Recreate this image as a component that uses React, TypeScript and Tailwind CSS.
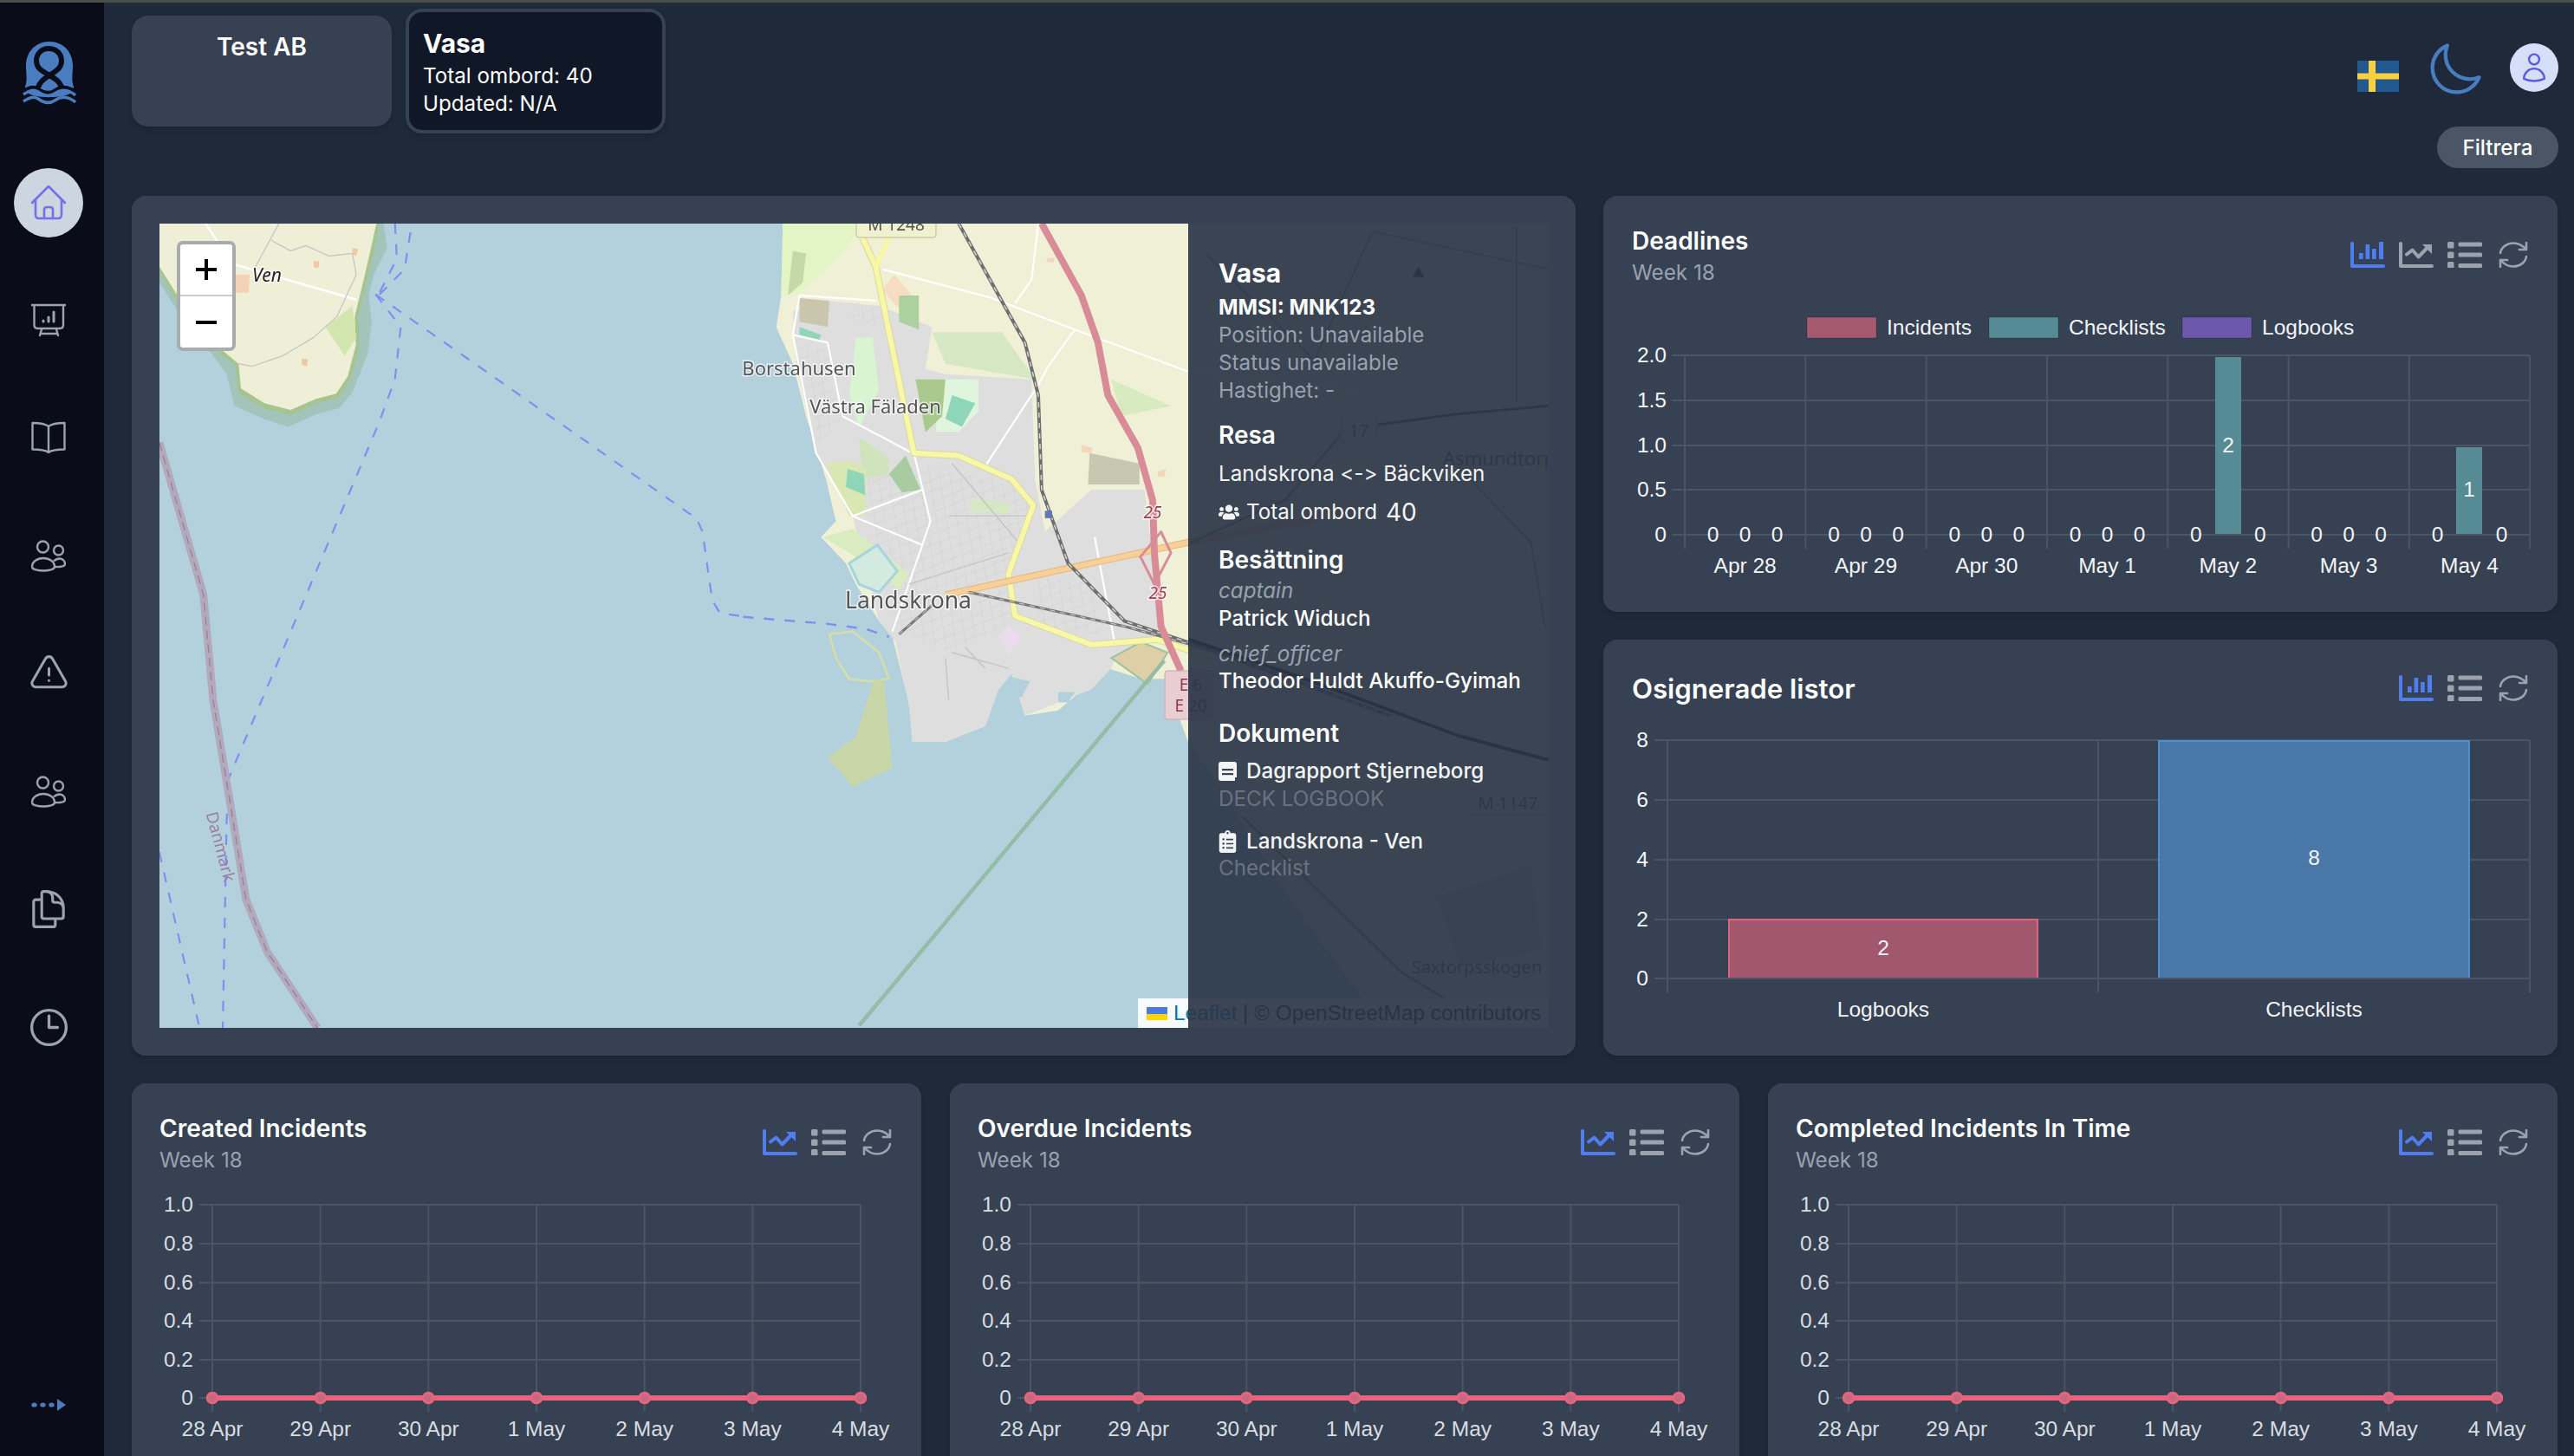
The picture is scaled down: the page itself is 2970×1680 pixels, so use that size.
import { FaClipboardList, FaUsers } from "react-icons/fa";
import {
  HiOutlineClock,
  HiOutlineDocumentDuplicate,
  HiOutlineExclamationTriangle,
  HiOutlineMoon,
  HiOutlineUser,
} from "react-icons/hi2";

const GRID = "#4b5563";
const CHART_FONT = "Liberation Sans, Arial, sans-serif";

function Logo() {
  return (
    <svg viewBox="0 0 90 90" className="w-[90px] h-[90px] ml-2">
      <path d="M42 8C26 8 15 20 15 36C15 46 17 52 14 60C13 66 18 72 42 72C66 72 71 66 70 60C67 52 69 46 69 36C69 20 58 8 42 8Z" fill="#4a7dc0" />
      <path d="M29 61C31 53 38 50 45 45C51 41 56 38 56 30C56 22 50 16 41 16C33 16 27 22 27 30C27 38 32 41 39 45C47 50 54 53 56 61" fill="none" stroke="#0a0d19" strokeWidth="6" />
      <path d="M10 66C20 61 24 60 29 63C36 68 42 69 48 65C54 61 60 60 66 63C68 64 72 65 74 67" fill="none" stroke="#0a0d19" strokeWidth="5" />
      <path d="M12 69C20 64 24 63 29 66C36 71 42 72 48 68C54 64 60 63 66 66C68 67 70 68 72 70" fill="none" stroke="#4a7dc0" strokeWidth="3.5" />
      <path d="M12 77C20 72 24 71 29 74C36 79 42 80 48 76C54 72 60 71 66 74C68 75 70 76 72 78" fill="none" stroke="#4a7dc0" strokeWidth="3.5" />
    </svg>
  );
}

function HomeIcon() {
  return (
    <svg viewBox="0 0 40 40" fill="none" stroke="#6f72e8" strokeWidth="2.6" strokeLinecap="round" strokeLinejoin="round" className="w-10 h-10">
      <path d="M1 20L20 1L39 20" />
      <path d="M5 16V34C5 37 7 38 9 38H31C33 38 35 37 35 34V16" />
      <path d="M15 38V28C15 26 16 25 18 25H22C24 25 25 26 25 28V38" />
    </svg>
  );
}

function PresentationIcon() {
  return (
    <svg viewBox="0 0 40 40" fill="none" stroke="currentColor" strokeWidth="2.4" strokeLinecap="round" strokeLinejoin="round" className="w-10 h-10">
      <path d="M0.5 3H40M3.5 3V26C3.5 28.5 5 30 7.5 30H33C35.5 30 37 28.5 37 26V3" />
      <path d="M10 38L12 31M31 38L29 31M10.5 36H30" />
      <path d="M14 22V21M20 22V17M26 22V11" strokeWidth="3" />
    </svg>
  );
}

function BookIcon() {
  return (
    <svg viewBox="0 0 40 40" fill="none" stroke="currentColor" strokeWidth="2.4" strokeLinejoin="round" className="w-10 h-10">
      <path d="M20 7C15 3 8 3 1.5 3V33.5C8 33.5 15 33.5 20 37C25 33.5 32 33.5 38.5 33.5V3C32 3 25 3 20 7ZM20 7V37" />
    </svg>
  );
}

function UsersIcon() {
  return (
    <svg viewBox="0 0 40 40" fill="none" stroke="currentColor" strokeWidth="2.4" className="w-10 h-10">
      <circle cx="13.5" cy="10" r="6.5" />
      <circle cx="31.5" cy="14" r="5.5" />
      <path d="M1 33C1 27 7 23 14 23C21 23 27 27 27 33C27 36 20 37.5 14 37.5C8 37.5 1 36 1 33Z" />
      <path d="M26 26.5C28 24.5 31 23.5 33 23.5C37 23.5 39 27 39 30C39 32.5 33 33.5 27.5 33" />
    </svg>
  );
}

function BarIcon({ active }: { active?: boolean }) {
  return (
    <svg viewBox="0 0 40 30" className={`w-10 h-[30px] ${active ? "text-[#4f7ef0]" : "text-[#9ca3af]"}`} fill="currentColor">
      <path d="M2 2V28H38" fill="none" stroke="currentColor" strokeWidth="4" strokeLinecap="round" strokeLinejoin="round" />
      <rect x="10" y="13" width="4.7" height="7" />
      <rect x="17.5" y="3" width="4.7" height="17" />
      <rect x="25" y="8" width="4.7" height="12" />
      <rect x="33" y="0" width="5" height="20" />
    </svg>
  );
}

function LineIcon({ active }: { active?: boolean }) {
  return (
    <svg viewBox="0 0 40 30" className={`w-10 h-[30px] ${active ? "text-[#4f7ef0]" : "text-[#9ca3af]"}`} fill="currentColor">
      <path d="M2 2V28H38" fill="none" stroke="currentColor" strokeWidth="4" strokeLinecap="round" strokeLinejoin="round" />
      <path d="M9 14.5L15.5 9.5L22.5 17.5L33 6.5" fill="none" stroke="currentColor" strokeWidth="4" strokeLinecap="round" strokeLinejoin="round" />
      <path d="M27 3H38V14Z" />
    </svg>
  );
}

function ListIcon() {
  return (
    <svg viewBox="0 0 40 30" className="w-10 h-[30px] text-[#9ca3af]" fill="currentColor">
      <rect x="0" y="0" width="7.5" height="7.5" rx="1.5" />
      <rect x="0" y="11.5" width="7.5" height="7.5" rx="1.5" />
      <rect x="0" y="23" width="7.5" height="7.5" rx="1.5" />
      <rect x="12.5" y="0.5" width="27.5" height="5" rx="1.5" />
      <rect x="12.5" y="12.5" width="27.5" height="5" rx="1.5" />
      <rect x="12.5" y="25" width="27.5" height="5" rx="1.5" />
    </svg>
  );
}

function RefreshIcon() {
  return (
    <svg viewBox="0 0 34 30" className="w-[34px] h-[30px] ml-[3px] text-[#9ca3af]" fill="none" stroke="currentColor" strokeWidth="2.6" strokeLinecap="round" strokeLinejoin="round">
      <path d="M2 13C3 6 10 1.5 17 1.5C23 1.5 28 4.5 32 9M32 1V9H24" />
      <path d="M32 17C31 24 24 28.5 17 28.5C11 28.5 6 25.5 2 21M2 29V21H10" />
    </svg>
  );
}

// tile map, redrawn with coordinates read off the reference crops
function P({ d, c, w, dash }: { d: string; c: string; w: number; dash?: string }) {
  return <path d={d} fill="none" stroke={c} strokeWidth={w} strokeDasharray={dash} strokeLinejoin="round" vectorEffect="non-scaling-stroke" />;
}

function F({ d, c }: { d: string; c: string }) {
  return <path d={d} fill={c} />;
}

function MapLabel({ x, y, size, children, color = "#555", italic }: { x: number; y: number; size: number; children: string; color?: string; italic?: boolean }) {
  return (
    <text x={x} y={y} fontSize={size} fill={color} fontStyle={italic ? "italic" : undefined} textAnchor="middle" dominantBaseline="central" fontFamily="Noto Sans, sans-serif" stroke="#ffffffb0" strokeWidth="3" paintOrder="stroke">
      {children}
    </text>
  );
}

const FERRY = "#7f8ff0";

function TileMap() {
  return (
    <svg viewBox="0 0 1603 928" className="absolute inset-0 w-[1603px] h-[928px] blur-[0.6px]">
      <defs>
        <pattern id="streets" width="30" height="20" patternUnits="userSpaceOnUse" patternTransform="rotate(-14)">
          <path d="M0 0H30M0 0V20" stroke="#cbcbcb" strokeWidth="1.6" fill="none" />
        </pattern>
      </defs>
      <rect width="1603" height="928" fill="#b3d1dd" />
      <g transform="translate(-14,-8) scale(0.4464,0.606)">
        <F d="M31 13L610 13L620 60L585 110L572 150L580 200L570 260L530 335L495 365L440 375L365 400L300 385L225 360L205 300L165 260L100 205L31 125Z" c="#a3c4bb" />
        <F d="M31 13L600 13L585 70L565 130L545 190L548 250L525 310L495 345L440 355L370 378L300 365L235 335L228 285L170 250L100 190L31 105Z" c="#a6c490" />
        <F d="M31 13L592 13L575 70L556 130L536 190L539 245L518 304L488 337L436 347L370 368L303 355L242 327L236 280L173 242L103 180L31 95Z" c="#eeefd6" />
        <F d="M460 210L530 170L540 230L510 265Z" c="#d3e6b0" />
        <F d="M225 110L265 110L262 145L225 145Z" c="#f3d2b8" />
        <F d="M400 270L415 272L412 285L400 282ZM430 85L445 85L442 98L430 96ZM530 60L545 62L540 75L530 72Z" c="#f0c8a8" />
        <P d="M150 13L220 90L540 158" c="#ffffff" w={2.5} />
        <P d="M340 13L280 95M320 45L370 65L410 55L470 75L530 70L540 110L490 190L430 230L350 265L270 285L235 280" c="#c3c3c8" w={1.2} />
        <P d="M590 148L1420 575L1435 600L1460 730L1480 755L1550 762" c={FERRY} w={2.2} dash="12 12" />
        <P d="M590 148L655 210L640 310L600 390L210 1070L205 1150L195 1545" c={FERRY} w={2.2} dash="12 12" />
        <P d="M31 1210L135 1545" c={FERRY} w={2.2} dash="12 12" />
        <P d="M640 13L645 80L600 145M680 30L665 100L600 148" c={FERRY} w={2.2} dash="12 12" />
        <P d="M31 430L145 720L170 920L255 1300L310 1400L440 1545" c="#b3a9bc" w={9} />
        <P d="M31 430L145 720L170 920L255 1300L310 1400L440 1545" c="#8f7f9b" w={1.2} dash="10 6" />
      </g>
      <g transform="translate(616,-8) scale(0.3827,0.606)">
        <F d="M270 13L265 150L250 210L300 280L340 380L400 500L430 580L385 610L460 660L490 700L560 770L600 800L640 900L660 940L660 1000L760 1000L880 970L920 900L960 870L1000 950L1100 940L1250 860L1350 880L1420 880L1492 1000L1600 1100L1800 1300L2100 1560L2600 1560L2600 0L270 0Z" c="#eff0d6" />
        <F d="M270 13L265 150L320 145L400 100L470 55L500 13Z" c="#e3f5c5" />
        <F d="M285 150L300 65L340 70L330 125Z" c="#c5d9a8" />
        <F d="M300 180L410 160L560 170L720 210L700 290L760 300L1020 310L1030 500L1060 600L1200 520L1360 520L1380 620L1420 800L1280 830L1260 860L1200 900L1000 950L960 870L920 900L880 970L760 1000L660 1000L650 930L610 810L560 770L480 570L370 450L310 280Z" c="#dedede" />
        <F d="M520 500L690 470L1000 520L1020 560L950 680L950 780L780 830L620 790L540 640Z" c="url(#streets)" />
        <F d="M310 235L400 250L440 400L375 430Z" c="url(#streets)" />
        <F d="M480 165L560 170L590 210L480 200Z" c="url(#streets)" />
        <F d="M1040 680L1200 700L1240 800L1040 780Z" c="url(#streets)" />
        <F d="M320 155L410 160L405 210L320 200Z" c="#c9c6ad" />
        <F d="M570 140L605 110L660 150L620 175Z" c="#f6dcc0" />
        <F d="M620 150L680 150L680 215L620 200Z" c="#add19e" />
        <F d="M720 220L930 220L1030 310L760 280Z" c="#d5e8c3" />
        <F d="M750 310L860 310L860 370L800 410L730 410Z" c="#dff5dc" />
        <F d="M780 340L850 355L810 400L760 385Z" c="#8fd5b8" />
        <F d="M670 310L760 310L750 380L700 410Z" c="#a9c98f" />
        <F d="M500 420L590 460L590 490L510 500Z" c="#cfe4bb" />
        <F d="M590 490L640 455L685 520L630 525Z" c="#a8cba0" />
        <F d="M400 470L480 465L520 480L520 570L470 570Z" c="#d9e8b3" />
        <F d="M465 480L515 490L518 530L460 515Z" c="#8fd5b8" />
        <F d="M490 230L540 230L560 330L500 400L470 340Z" c="#d8f4d0" />
        <F d="M320 210L385 225L380 235L320 225Z" c="#8fd5b8" />
        <F d="M840 535L960 545L950 565L830 560Z" c="#d5e8c3" />
        <F d="M390 610L480 595L650 680L620 710L470 640Z" c="#d8ecc0" />
        <path d="M470 660L555 625L615 675L560 715L500 700Z" fill="#d3eae0" stroke="#a6d5dd" strokeWidth="3" vectorEffect="non-scaling-stroke" />
        <F d="M1195 450L1345 470L1345 510L1190 510Z" c="#c8c8b0" />
        <F d="M1260 310L1440 360L1290 380Z" c="#d8ebc0" />
        <F d="M920 800L950 780L985 800L950 835Z" c="#eadced" />
        <F d="M950 875L1015 885L990 915L950 915ZM1100 905L1150 905L1130 925L1100 925Z" c="#b3d1dd" />
        <F d="M1170 435L1205 440L1200 450L1170 448ZM1400 485L1425 480L1420 495L1400 495ZM1065 80L1090 78L1085 88L1065 86Z" c="#f3d7bd" />
        <path d="M1260 840L1350 810L1430 830L1370 890Z" fill="#dfcfa8" stroke="#9bc49a" strokeWidth="2" vectorEffect="non-scaling-stroke" />
        <P d="M410 795L480 790L560 830L590 880L530 885L470 880L430 840Z" c="#d4dfa8" w={2.5} />
        <F d="M545 880L575 885L600 1050L480 1085L405 1030L490 990Z" c="#c9d7a8" />
        <P d="M1420 845L500 1540" c="#93bda6" w={4.5} />
        <P d="M320 150L550 160M320 150L300 225L370 450L480 570L690 520M300 225L405 240L450 380L660 450M665 450L715 580L600 790M480 570L690 625M570 100L900 155L1150 215L1492 295L2000 330M1040 320L880 475M1150 215L1070 285L1040 320M1040 13L1020 120L970 165M1210 610L1270 810" c="#ffffff" w={2.2} />
        <P d="M770 570L1010 570M650 700L950 640M780 470L980 620M780 830L950 860M760 840L770 920M820 820L880 860" c="#c4c4c4" w={1.4} />
        <P d="M510 40L550 95L590 220L665 450L800 455L960 500L1025 550L950 680L970 760L1200 815L1400 805L1492 825L2000 900" c="#d8d8a8" w={8} />
        <P d="M510 40L550 95L590 220L665 450L800 455L960 500L1025 550L950 680L970 760L1200 815L1400 805L1492 825L2000 900M590 40L550 95" c="#f7f7a6" w={6} />
        <P d="M760 720L1492 620L2000 560" c="#e8b87c" w={8} />
        <P d="M760 720L1492 620L2000 560" c="#f7cf98" w={6} />
        <P d="M800 13L1000 240L1040 340L1050 520L1130 660L1300 770L1560 825L2100 950" c="#6e6e6e" w={4} />
        <P d="M800 13L1000 240L1040 340L1050 520L1130 660L1300 770L1560 825L2100 950" c="#d4d4d4" w={1.5} dash="6 6" />
        <P d="M620 795L720 740M830 715L1300 780L1560 825" c="#777" w={3} />
        <P d="M620 795L720 740M830 715L1300 780L1560 825" c="#d4d4d4" w={1} dash="6 6" />
        <P d="M1050 13L1170 150L1220 240L1250 340L1340 440L1385 540L1390 640L1410 780L1470 865" c="#d98c98" w={8} />
        <P d="M1345 650L1410 600L1440 640L1390 700L1350 650" c="#d98c98" w={3} />
        <P d="M150 762L400 775L520 785L590 800" c={FERRY} w={2.4} dash="12 12" />
        <rect x="1060" y="560" width="22" height="14" fill="#6478b8" />
      </g>
      <g transform="translate(1166,-28) scale(0.3333,0.619)">
        <P d="M720 420L1000 400L1310 385" c="#555" w={3} />
        <P d="M65 820L500 900L1000 1000L1310 1045" c="#222" w={4} />
        <P d="M250 1150L800 1440L950 1490" c="#a08090" w={3} />
        <P d="M70 640L400 560L590 440" c="#996" w={3} />
        <P d="M700 60L1310 130M1200 50L1200 380M1000 500L1250 640L1300 800M120 100L500 300L700 60" c="#888" w={1.5} />
        <F d="M920 1300L1250 1240L1290 1400L1000 1430Z" c="#d4e0b8" />
        <path d="M840 145L860 125L880 145Z" fill="#333" />
      </g>
      <MapLabel x={124} y={59} size={21} color="#222" italic>Ven</MapLabel>
      <text x={71} y={719} fontSize={19} fill="#9c7f9e" textAnchor="middle" dominantBaseline="central" transform="rotate(75 71 719)" fontFamily="Noto Sans, sans-serif">Danmark</text>
      <MapLabel x={738} y={166} size={22}>Borstahusen</MapLabel>
      <MapLabel x={826} y={210} size={22}>Västra Fäladen</MapLabel>
      <MapLabel x={864} y={434} size={26.5}>Landskrona</MapLabel>
      <MapLabel x={1146} y={333} size={19} color="#a53c4c" italic>25</MapLabel>
      <MapLabel x={1152} y={426} size={19} color="#a53c4c" italic>25</MapLabel>
      <rect x="804" y="-10" width="92" height="26" rx="3" fill="#f0f2cf" stroke="#bdbd8c" />
      <text x="850" y="8" fontSize="19" textAnchor="middle" fill="#555" fontFamily="Noto Sans, sans-serif">M 1248</text>
      <rect x="1160" y="516" width="56" height="56" rx="3" fill="#e8cdd3" stroke="#d0a6ae" />
      <text x="1190" y="532" fontSize="19" textAnchor="middle" dominantBaseline="central" fill="#8a3a4a" fontFamily="Noto Sans, sans-serif">E 6</text>
      <text x="1190" y="556" fontSize="19" textAnchor="middle" dominantBaseline="central" fill="#8a3a4a" fontFamily="Noto Sans, sans-serif">E 20</text>
      <rect x="1363" y="222" width="42" height="30" rx="3" fill="#eeeeda" stroke="#aaa" />
      <text x="1384" y="238" fontSize="20" textAnchor="middle" dominantBaseline="central" fill="#555" fontFamily="Noto Sans, sans-serif">17</text>
      <text x="1546" y="270" fontSize="22" textAnchor="middle" dominantBaseline="central" fill="#555" fontFamily="Noto Sans, sans-serif">Asmundtorp</text>
      <rect x="1512" y="652" width="92" height="30" rx="3" fill="#eeeeda" stroke="#aaa" />
      <text x="1556" y="668" fontSize="20" textAnchor="middle" dominantBaseline="central" fill="#555" fontFamily="Noto Sans, sans-serif">M 1147</text>
      <text x="1520" y="857" fontSize="20" textAnchor="middle" dominantBaseline="central" fill="#557" fontFamily="Noto Sans, sans-serif">Saxtorpsskogen</text>
    </svg>
  );
}

function DocBookIcon() {
  return (
    <svg viewBox="0 0 21 22" className="w-[21px] h-[22px] shrink-0">
      <rect width="21" height="22" rx="3" fill="#f3f4f6" />
      <rect x="4" y="8" width="13" height="2.2" fill="#374151" />
      <rect x="4" y="13" width="13" height="2.2" fill="#374151" />
      <rect x="19" y="18" width="2" height="4" fill="#374151" />
    </svg>
  );
}

function InfoPanel() {
  return (
    <div className="absolute inset-y-0 right-0 w-[416px] bg-[#2a3548]/92 pl-[35px] pt-[39px] text-[24.2px] leading-[32px] text-gray-100">
      <div className="text-[30px] leading-[36px] font-bold text-white">Vasa</div>
      <div className="mt-[6px] font-bold text-white">MMSI: MNK123</div>
      <div className="text-gray-400">Position: Unavailable</div>
      <div className="text-gray-400">Status unavailable</div>
      <div className="text-gray-400">Hastighet: -</div>
      <div className="mt-[17px] text-[28px] leading-[36px] font-semibold text-white">Resa</div>
      <div className="mt-[11px] [font-feature-settings:'calt'_0]">Landskrona &lt;-&gt; Bäckviken</div>
      <div className="mt-3 flex items-center">
        <FaUsers className="w-6 h-6 mr-2 shrink-0" />
        <span>Total ombord</span>
        <span className="ml-[10px] text-[28px]">40</span>
      </div>
      <div className="mt-[21px] text-[28px] leading-[36px] font-semibold text-white">Besättning</div>
      <div className="mt-[2px] italic text-gray-400">captain</div>
      <div className="font-medium text-white">Patrick Widuch</div>
      <div className="mt-[9px] italic text-gray-400">chief_officer</div>
      <div className="-mt-px font-medium text-white">Theodor Huldt Akuffo-Gyimah</div>
      <div className="mt-[26px] text-[28px] leading-[36px] font-semibold text-white">Dokument</div>
      <div className="mt-[10px] flex items-center font-medium">
        <DocBookIcon />
        <span className="ml-[11px]">Dagrapport Stjerneborg</span>
      </div>
      <div className="text-gray-500 uppercase">Deck logbook</div>
      <div className="mt-[17px] flex items-center font-medium">
        <FaClipboardList className="w-[21px] h-[26px] shrink-0" />
        <span className="ml-[11px]">Landskrona - Ven</span>
      </div>
      <div className="-mt-px text-gray-500">Checklist</div>
    </div>
  );
}

function MapCard() {
  return (
    <div className="bg-gray-700 rounded-[16px] shadow-md p-8 pr-[31px]">
      <div className="relative h-[928px] overflow-hidden">
        <TileMap />
        <div className="absolute left-5 top-5 w-[68px] h-[127px] border-4 border-[#a7adad] rounded-[7px] bg-white flex flex-col text-black overflow-hidden">
          <div className="h-[60px] border-b-2 border-[#ccc] flex items-center justify-center">
            <svg viewBox="0 0 26 26" className="w-[26px] h-[26px]"><path d="M13 1V25M1 13H25" stroke="#000" strokeWidth="4" /></svg>
          </div>
          <div className="flex-1 flex items-center justify-center">
            <svg viewBox="0 0 26 4" className="w-[26px] h-1"><path d="M1 2H25" stroke="#000" strokeWidth="4" /></svg>
          </div>
        </div>
        <div className="absolute right-0 bottom-0 h-[34px] w-[474px] bg-white/90 flex items-center pl-[10px] gap-[7px] text-[24.4px] text-[#111] font-['Liberation_Sans',sans-serif]">
          <svg viewBox="0 0 24 15" className="w-6 h-[15px] shrink-0">
            <rect width="24" height="8" fill="#4c7be0" />
            <rect y="8" width="24" height="7" fill="#ffd500" />
          </svg>
          <span className="whitespace-nowrap"><span className="text-[#0078a8]">Leaflet</span> | © OpenStreetMap contributors</span>
        </div>
        <InfoPanel />
      </div>
    </div>
  );
}

function T({ x, y, children, anchor = "middle", color = "#f3f4f6" }: { x: number; y: number; children: string | number; anchor?: "middle" | "end"; color?: string }) {
  return (
    <text x={x} y={y - 1} fontSize="24.5" fontFamily={CHART_FONT} fill={color} textAnchor={anchor} dominantBaseline="central">
      {children}
    </text>
  );
}

function Grid({ xs, ys, tickLeft, bottom }: { xs: number[]; ys: number[]; tickLeft: number; bottom: number }) {
  return (
    <g stroke={GRID} strokeWidth="2">
      {ys.map((y) => (
        <line key={y} x1={tickLeft} x2={xs[xs.length - 1]} y1={y} y2={y} />
      ))}
      {xs.map((x) => (
        <line key={x} x1={x} x2={x} y1={ys[0]} y2={bottom} />
      ))}
    </g>
  );
}

const deadlineDays = ["Apr 28", "Apr 29", "Apr 30", "May 1", "May 2", "May 3", "May 4"];

function DeadlinesChart() {
  const xs = [0, 1, 2, 3, 4, 5, 6, 7].map((i) => 94 + i * 139.3);
  const ys = [80, 132, 184, 235, 287];
  const legend = [
    { x: 235, fill: "#a55a70", label: "Incidents", tx: 327 },
    { x: 445, fill: "#568b95", label: "Checklists", tx: 537 },
    { x: 668, fill: "#6d58ae", label: "Logbooks", tx: 760 },
  ];
  return (
    <svg viewBox="0 0 1101 376" className="w-[1101px] h-[376px]">
      {legend.map((l) => (
        <g key={l.label}>
          <rect x={l.x} y="36" width="80" height="24" fill={l.fill} stroke="#00000030" strokeWidth="1" />
          <text x={l.tx} y="47" fontSize="24.5" fontFamily={CHART_FONT} fill="#f3f4f6" dominantBaseline="central">{l.label}</text>
        </g>
      ))}
      <Grid xs={xs} ys={ys} tickLeft={79} bottom={303} />
      {["2.0", "1.5", "1.0", "0.5", "0"].map((v, i) => (
        <T key={v} x={73} y={ys[i]} anchor="end">{v}</T>
      ))}
      <rect x="706" y="82" width="30" height="204" fill="#568b95" />
      <rect x="984" y="186" width="30" height="100" fill="#568b95" />
      <T x={721} y={184}>2</T>
      <T x={999} y={235}>1</T>
      {deadlineDays.map((d, i) => {
        const c = 94 + 69.65 + 139.3 * i;
        const zeros = i === 4 || i === 6 ? [-37, 37] : [-37, 0, 37];
        return (
          <g key={d}>
            {zeros.map((o) => (
              <T key={o} x={c + o} y={287}>0</T>
            ))}
            <T x={c} y={323}>{d}</T>
          </g>
        );
      })}
    </svg>
  );
}

function UnsignedChart() {
  const ys = [24, 93, 162, 231, 299];
  return (
    <svg viewBox="0 0 1101 388" className="w-[1101px] h-[388px]">
      <Grid xs={[74, 571, 1069]} ys={ys} tickLeft={59} bottom={315} />
      {["8", "6", "4", "2", "0"].map((v, i) => (
        <T key={v} x={52} y={ys[i]} anchor="end">{v}</T>
      ))}
      <path d="M145 298V231H501V298" fill="#a55a70" fillOpacity="0.96" stroke="#e0637e" strokeWidth="2" />
      <path d="M641 298V25H999V298" fill="#4a7aac" fillOpacity="0.94" stroke="#4f8ecf" strokeWidth="2" />
      <T x={323} y={264}>2</T>
      <T x={820} y={160}>8</T>
      <T x={323} y={335}>Logbooks</T>
      <T x={820} y={335}>Checklists</T>
    </svg>
  );
}

const lineDays = ["28 Apr", "29 Apr", "30 Apr", "1 May", "2 May", "3 May", "4 May"];

function LineChart() {
  const xs = lineDays.map((_, i) => 93 + i * 124.67);
  const ys = [35, 80, 125, 169, 214, 258];
  return (
    <svg viewBox="0 0 911 345" className="w-[911px] h-[345px]">
      <Grid xs={xs} ys={ys} tickLeft={78} bottom={274} />
      {["1.0", "0.8", "0.6", "0.4", "0.2", "0"].map((v, i) => (
        <T key={v} x={71} y={ys[i]} anchor="end" color="#d9dce1">{v}</T>
      ))}
      <line x1={xs[0]} x2={xs[6]} y1={258} y2={258} stroke="#e8657d" strokeWidth="6" />
      {xs.map((x, i) => (
        <g key={x}>
          <circle cx={x} cy={258} r="6" fill="#c9697f" stroke="#e8657d" strokeWidth="2.5" />
          <T x={x} y={294} color="#d9dce1">{lineDays[i]}</T>
        </g>
      ))}
    </svg>
  );
}

function LineCard({ title }: { title: string }) {
  return (
    <div className="bg-gray-700 rounded-[16px] shadow-md overflow-hidden">
      <div className="flex justify-between pl-8 pr-[34px] pt-9">
        <div>
          <div className="text-[28px] leading-8 font-semibold text-white">{title}</div>
          <div className="mt-[5px] text-[24.2px] leading-8 text-gray-400">Week 18</div>
        </div>
        <div className="flex items-start gap-4 pt-[17px]">
          <LineIcon active />
          <ListIcon />
          <RefreshIcon />
        </div>
      </div>
      <LineChart />
    </div>
  );
}

export default function App() {
  const navIcons = [
    <PresentationIcon key="a" />,
    <BookIcon key="b" />,
    <UsersIcon key="c" />,
    <HiOutlineExclamationTriangle key="d" className="w-[49px] h-[49px] -m-[4.5px]" />,
    <UsersIcon key="e" />,
    <HiOutlineDocumentDuplicate key="f" className="w-[50px] h-[50px] -m-[5px]" />,
    <HiOutlineClock key="g" className="w-[53px] h-[53px] -m-[6.5px]" />,
  ];

  return (
    <div className="h-[1680px] w-[2970px] overflow-hidden flex flex-col bg-gray-800 font-['Inter',sans-serif] text-white">
      <div className="h-[3px] bg-[#4a4f45] shrink-0" />
      <div className="flex flex-1 min-h-0">
        <aside className="w-[120px] shrink-0 bg-[#0a0d19] flex flex-col items-center pt-[37px] pb-[50px] pr-2">
          <Logo />
          <div className="mt-16 w-20 h-20 rounded-full bg-[#cdd5e1] flex items-center justify-center">
            <HomeIcon />
          </div>
          <div className="mt-[75px] flex flex-col gap-24 text-[#9ca3af]">{navIcons}</div>
          <svg viewBox="0 0 40 18" className="mt-auto w-10 h-[18px]" fill="#4a7dc0">
            <ellipse cx="3.5" cy="9" rx="3.2" ry="2.6" />
            <ellipse cx="13.5" cy="9" rx="3.2" ry="2.6" />
            <ellipse cx="23.5" cy="9" rx="3.2" ry="2.6" />
            <path d="M30 2L40 9L30 16Z" />
          </svg>
        </aside>

        <main className="flex-1 min-w-0 pl-8 pr-[19px]">
          <header className="h-[223px] flex justify-between pt-[7px]">
            <div className="flex items-center gap-4 h-36">
              <div className="w-[300px] h-32 rounded-[19px] bg-gray-700 shadow-md pt-[18px] text-center text-[28px] leading-9 font-semibold">Test AB</div>
              <div className="w-[300px] h-36 rounded-[19px] bg-gray-900 border-4 border-gray-700 shadow-md pl-4 pt-[18px] text-[24.2px] leading-8">
                <div className="text-[30px] leading-9 font-bold">Vasa</div>
                <div className="mt-1">Total ombord: 40</div>
                <div>Updated: N/A</div>
              </div>
            </div>
            <div className="flex flex-col items-end pt-9 -mr-px">
              <div className="flex items-start">
                <svg viewBox="0 0 48 36" className="w-12 h-9 mt-6 mr-[30px]">
                  <rect width="48" height="36" fill="#235790" />
                  <rect x="13" width="8" height="36" fill="#fcd03c" />
                  <rect y="14.5" width="48" height="7" fill="#fcd03c" />
                </svg>
                <HiOutlineMoon className="w-[69px] h-[69px] text-[#4a7dc0]" />
                <div className="ml-[29px] mt-1 w-14 h-14 rounded-full bg-[#d5dffa] flex items-center justify-center">
                  <HiOutlineUser className="w-[38px] h-[38px] text-[#5b5be0]" />
                </div>
              </div>
              <button className="mt-[31px] w-[140px] h-12 rounded-full bg-gray-600 pt-[2px] text-[24.2px] font-medium text-white">Filtrera</button>
            </div>
          </header>

          <div className="grid grid-cols-[1666px_1fr] gap-8">
            <MapCard />
            <div className="flex flex-col gap-8">
              <div className="h-[480px] bg-gray-700 rounded-[16px] shadow-md">
                <div className="flex justify-between pl-[33px] pr-[34px] pt-9 h-[104px]">
                  <div>
                    <div className="text-[28px] leading-8 font-semibold">Deadlines</div>
                    <div className="mt-[5px] text-[24.2px] leading-8 text-gray-400">Week 18</div>
                  </div>
                  <div className="flex items-start gap-4 pt-[17px]">
                    <BarIcon active />
                    <LineIcon />
                    <ListIcon />
                    <RefreshIcon />
                  </div>
                </div>
                <DeadlinesChart />
              </div>
              <div className="h-[480px] bg-gray-700 rounded-[16px] shadow-md">
                <div className="flex justify-between items-start pl-[33px] pr-[34px] pt-[37px] h-[92px]">
                  <div className="text-[31.2px] leading-10 font-semibold">Osignerade listor</div>
                  <div className="flex items-center gap-4 pt-1">
                    <BarIcon active />
                    <ListIcon />
                    <RefreshIcon />
                  </div>
                </div>
                <UnsignedChart />
              </div>
            </div>
          </div>

          <div className="mt-8 grid grid-cols-3 gap-[33px]">
            <LineCard title="Created Incidents" />
            <LineCard title="Overdue Incidents" />
            <LineCard title="Completed Incidents In Time" />
          </div>
        </main>
      </div>
    </div>
  );
}
